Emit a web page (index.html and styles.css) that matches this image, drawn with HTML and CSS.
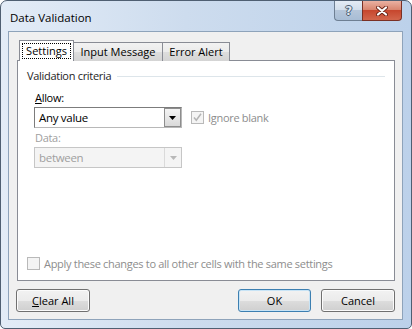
FILE: index.html
```html
<!DOCTYPE html>
<html lang="en">
<head>
    <meta charset="UTF-8">
    <title>Data Validation</title>
    <link rel="stylesheet" href="styles.css">
</head>
<body>
    <div class="window">
        <div class="titlebar">
            <span class="title">Data Validation</span>
            <div class="caption">
                <span class="cap-btn help">?</span>
                <span class="cap-btn close">
                    <svg width="12" height="10" viewBox="0 0 12 10">
                        <path d="M2 1.5 L10 8.5 M10 1.5 L2 8.5" stroke="#6b2418" stroke-width="4" stroke-linecap="round"/>
                        <path d="M2 1.5 L10 8.5 M10 1.5 L2 8.5" stroke="#fff" stroke-width="2.2" stroke-linecap="round"/>
                    </svg>
                </span>
            </div>
        </div>

        <div class="client">
            <div class="tabs">
                <div class="tab active"><span class="focus">Settings</span></div>
                <div class="tab tab-input">Input Message</div>
                <div class="tab tab-error">Error Alert</div>
            </div>

            <div class="panel">
                <div class="group-title">Validation criteria</div>

                <div class="field-label"><u>A</u>llow:</div>
                <div class="row">
                    <div class="combo">
                        <span class="combo-text">Any value</span>
                        <span class="drop">
                            <svg width="7" height="4" viewBox="0 0 7 4"><polygon points="0,0 7,0 3.5,4" fill="#000"/></svg>
                        </span>
                    </div>
                    <label class="check disabled">
                        <span class="box">
                            <svg width="11" height="11" viewBox="0 0 11 11"><path d="M2 5.5 L4.3 8.3 L9 1.8" fill="none" stroke="#b4b4b4" stroke-width="1.5"/></svg>
                        </span>
                        Ignore blank
                    </label>
                </div>

                <div class="field-label disabled">Data:</div>
                <div class="combo disabled">
                    <span class="combo-text">between</span>
                    <span class="drop">
                        <svg width="7" height="4" viewBox="0 0 7 4"><polygon points="0,0 7,0 3.5,4" fill="#b8b8b8"/></svg>
                    </span>
                </div>

                <label class="check disabled apply">
                    <span class="box"></span>
                    Apply these changes to all other cells with the same settings
                </label>
            </div>

            <div class="footer">
                <button class="btn clear"><u>C</u>lear All</button>
                <div class="actions">
                    <button class="btn default">OK</button>
                    <button class="btn">Cancel</button>
                </div>
            </div>
        </div>
    </div>
</body>
</html>
```

FILE: styles.css
```css
* {
    box-sizing: border-box;
}
body {
    margin: 0;
    font-family: "Open Sans", "Noto Sans", sans-serif;
    font-size: 11px;
    letter-spacing: -0.3px;
    color: #000;
    background: #fff;
}
.window {
    width: 412px;
    height: 329px;
    border: 1px solid #4f5f72;
    border-radius: 7px 7px 5px 5px;
    background: linear-gradient(90deg, #e3ecf7 0%, #cddcee 45%, #bcd1ea 100%);
    padding: 0 8px 8px 7px;
    display: flex;
    flex-direction: column;
}
.titlebar {
    height: 30px;
    display: flex;
    justify-content: space-between;
    align-items: flex-start;
    padding-left: 2px;
}
.title {
    margin-top: 9px;
    line-height: 16px;
    font-size: 11.5px;
    letter-spacing: 0;
}
.caption {
    display: flex;
    margin-right: 1px;
}
.cap-btn {
    height: 20px;
    display: flex;
    align-items: center;
    justify-content: center;
    border: 1px solid #6e7f93;
    border-top: none;
}
.help {
    width: 28px;
    border-radius: 0 0 0 4px;
    border-right: none;
    background: linear-gradient(#e4ecf5 0%, #d3dfec 45%, #b5c6da 50%, #a8bdd5 100%);
    font-family: "DejaVu Sans", sans-serif;
    font-weight: bold;
    font-size: 12px;
    color: #dfe7f0;
    text-shadow: 1px 0 #4b5c70, -1px 0 #4b5c70, 0 1px #4b5c70, 0 -1px #4b5c70;
}
.close {
    width: 40px;
    border-radius: 0 0 4px 0;
    border-color: #7a3024;
    background: linear-gradient(#eab1a2 0%, #d98670 45%, #c7472e 50%, #d2664c 100%);
}
.client {
    height: 289px;
    background: #f0f0f0;
    border: 1px solid #8ea3ba;
    padding: 8px 7px 7px 8px;
    display: flex;
    flex-direction: column;
}
.tabs {
    display: flex;
    align-items: flex-end;
    height: 21px;
    padding-left: 2px;
    margin-bottom: -1px;
    position: relative;
    z-index: 1;
}
.tab {
    height: 19px;
    padding-top: 1px;
    line-height: 16px;
    text-align: center;
    letter-spacing: 0;
    border: 1px solid #898c95;
    border-bottom: none;
    background: linear-gradient(#f2f2f2 0%, #ebebeb 50%, #dddddd 52%, #d4d4d4 100%);
    margin-left: -1px;
}
.tab-input {
    width: 90px;
}
.tab-error {
    width: 68px;
}
.tab.active {
    height: 21px;
    padding: 2px 2px 0;
    background: #fff;
    margin-left: 0;
    margin-right: 0;
    position: relative;
    z-index: 2;
}
.focus {
    display: block;
    width: 49px;
    height: 16px;
    line-height: 14px;
    text-align: center;
    border: 1px dotted #000;
}
.panel {
    height: 221px;
    background: #fff;
    border: 1px solid #898c95;
    padding: 7px 9px 9px 9px;
    display: flex;
    flex-direction: column;
}
.group-title {
    display: flex;
    align-items: center;
    line-height: 15px;
    color: #1e1e1e;
}
.group-title::after {
    content: "";
    flex: 1;
    height: 1px;
    margin-left: 6px;
    margin-top: 2px;
    background: #dde5ea;
}
.field-label {
    margin: 7px 0 2px 8px;
    line-height: 15px;
}
.field-label.disabled {
    margin-top: 2px;
    color: #a0a0a0;
}
.row {
    display: flex;
    align-items: center;
    margin-left: 7px;
}
.combo {
    width: 148px;
    height: 21px;
    display: flex;
    align-items: stretch;
    border: 1px solid #7c7c7c;
    border-right-color: #b8b8b8;
    border-bottom-color: #b8b8b8;
    background: #fff;
}
.combo-text {
    flex: 1;
    padding-left: 4px;
    line-height: 19px;
    font-size: 11.5px;
}
.drop {
    width: 17px;
    display: flex;
    align-items: center;
    justify-content: center;
    border: 1px solid #8d8d8d;
    background: linear-gradient(#f4f4f4 0%, #e7e7e7 50%, #d9d9d9 100%);
}
.combo.disabled {
    margin-left: 7px;
    border-color: #c6c6c6;
    background: #f4f4f4;
    color: #a0a0a0;
}
.combo.disabled .drop {
    border: none;
    border-left: 1px solid #dadada;
    background: #f4f4f4;
}
.check {
    display: flex;
    align-items: center;
    gap: 4px;
    margin-left: 9px;
}
.check.disabled {
    color: #8d8d8d;
}
.box {
    width: 13px;
    height: 13px;
    display: flex;
    align-items: center;
    justify-content: center;
    border: 1px solid #b9b9b9;
    background: #f4f4f4;
}
.apply {
    margin-top: auto;
    margin-left: 0;
    line-height: 15px;
}
.footer {
    display: flex;
    justify-content: space-between;
    margin-top: 8px;
}
.btn {
    height: 23px;
    width: 73px;
    font: inherit;
    color: #000;
    border: 1px solid #707070;
    border-radius: 3px;
    background: linear-gradient(#f2f2f2 0%, #ebebeb 50%, #dddddd 51%, #cfcfcf 100%);
    box-shadow: inset 0 0 0 1px #fbfbfb;
    padding: 0;
}
.clear {
    width: 74px;
    margin-left: -1px;
}
.actions {
    display: flex;
    gap: 10px;
}
.actions .btn:last-child {
    width: 74px;
}
.btn.default {
    border-color: #3c7fb1;
    box-shadow: inset 0 0 0 1px #c8e4f6;
}
```
